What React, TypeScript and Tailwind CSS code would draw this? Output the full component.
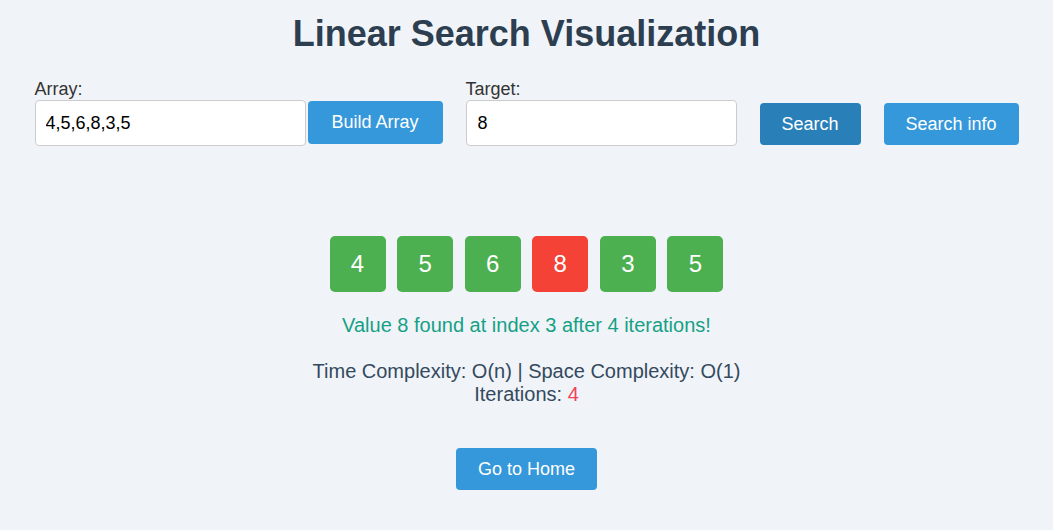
const VALUES = [4, 5, 6, 8, 3, 5];
const FOUND = 3;

const btn = "h-[42px] rounded-[4px] text-white text-[18px] mb-[1px] shrink-0";

export default function App() {
  return (
    <div className="min-h-[530px] bg-[#f0f4f8] font-['Liberation_Sans',Arial,sans-serif] flex flex-col items-center pt-[13px]">
      <h1 className="text-[36px] font-bold text-[#2c3e50] leading-[41px]">Linear Search Visualization</h1>

      <div className="flex items-end gap-[23px] mt-[25px]">
        <div className="flex flex-col">
          <label className="text-[18px] text-[#333] leading-[21px]">Array:</label>
          <div className="flex items-center gap-[2px]">
            <input
              defaultValue="4,5,6,8,3,5"
              className="w-[271px] h-[46px] border border-[#ccc] rounded-[4px] bg-white pl-[10px] text-[18px] text-black outline-none"
            />
            <button className={`${btn} w-[135px] h-[43px] bg-[#3498db]`}>Build Array</button>
          </div>
        </div>
        <div className="flex flex-col">
          <label className="text-[18px] text-[#333] leading-[21px]">Target:</label>
          <input
            defaultValue="8"
            className="w-[271px] h-[46px] border border-[#ccc] rounded-[4px] bg-white pl-[11px] text-[18px] text-black outline-none"
          />
        </div>
        <button className={`${btn} w-[101px] bg-[#2980b9]`}>Search</button>
        <button className={`${btn} w-[135px] bg-[#3498db]`}>Search info</button>
      </div>

      <div className="flex gap-[11.6px] mt-[90px]">
        {VALUES.map((v, i) => (
          <div
            key={i}
            className={`w-[56px] h-[56px] rounded-[5px] flex items-center justify-center text-white text-[24px] ${
              i === FOUND ? "bg-[#f44336]" : "bg-[#4caf50]"
            }`}
          >
            {v}
          </div>
        ))}
      </div>

      <p className="mt-[22px] text-[20px] leading-[23px] text-[#16a085]">
        Value 8 found at index 3 after 4 iterations!
      </p>

      <div className="mt-[23px] text-[20px] leading-[23px] text-[#34495e] text-center">
        <div>Time Complexity: O(n) | Space Complexity: O(1)</div>
        <div>
          Iterations: <span className="text-[#f0435a]">4</span>
        </div>
      </div>

      <button className="mt-[42px] w-[141px] h-[42px] rounded-[4px] bg-[#3498db] text-white text-[18px]">Go to Home</button>
    </div>
  );
}
